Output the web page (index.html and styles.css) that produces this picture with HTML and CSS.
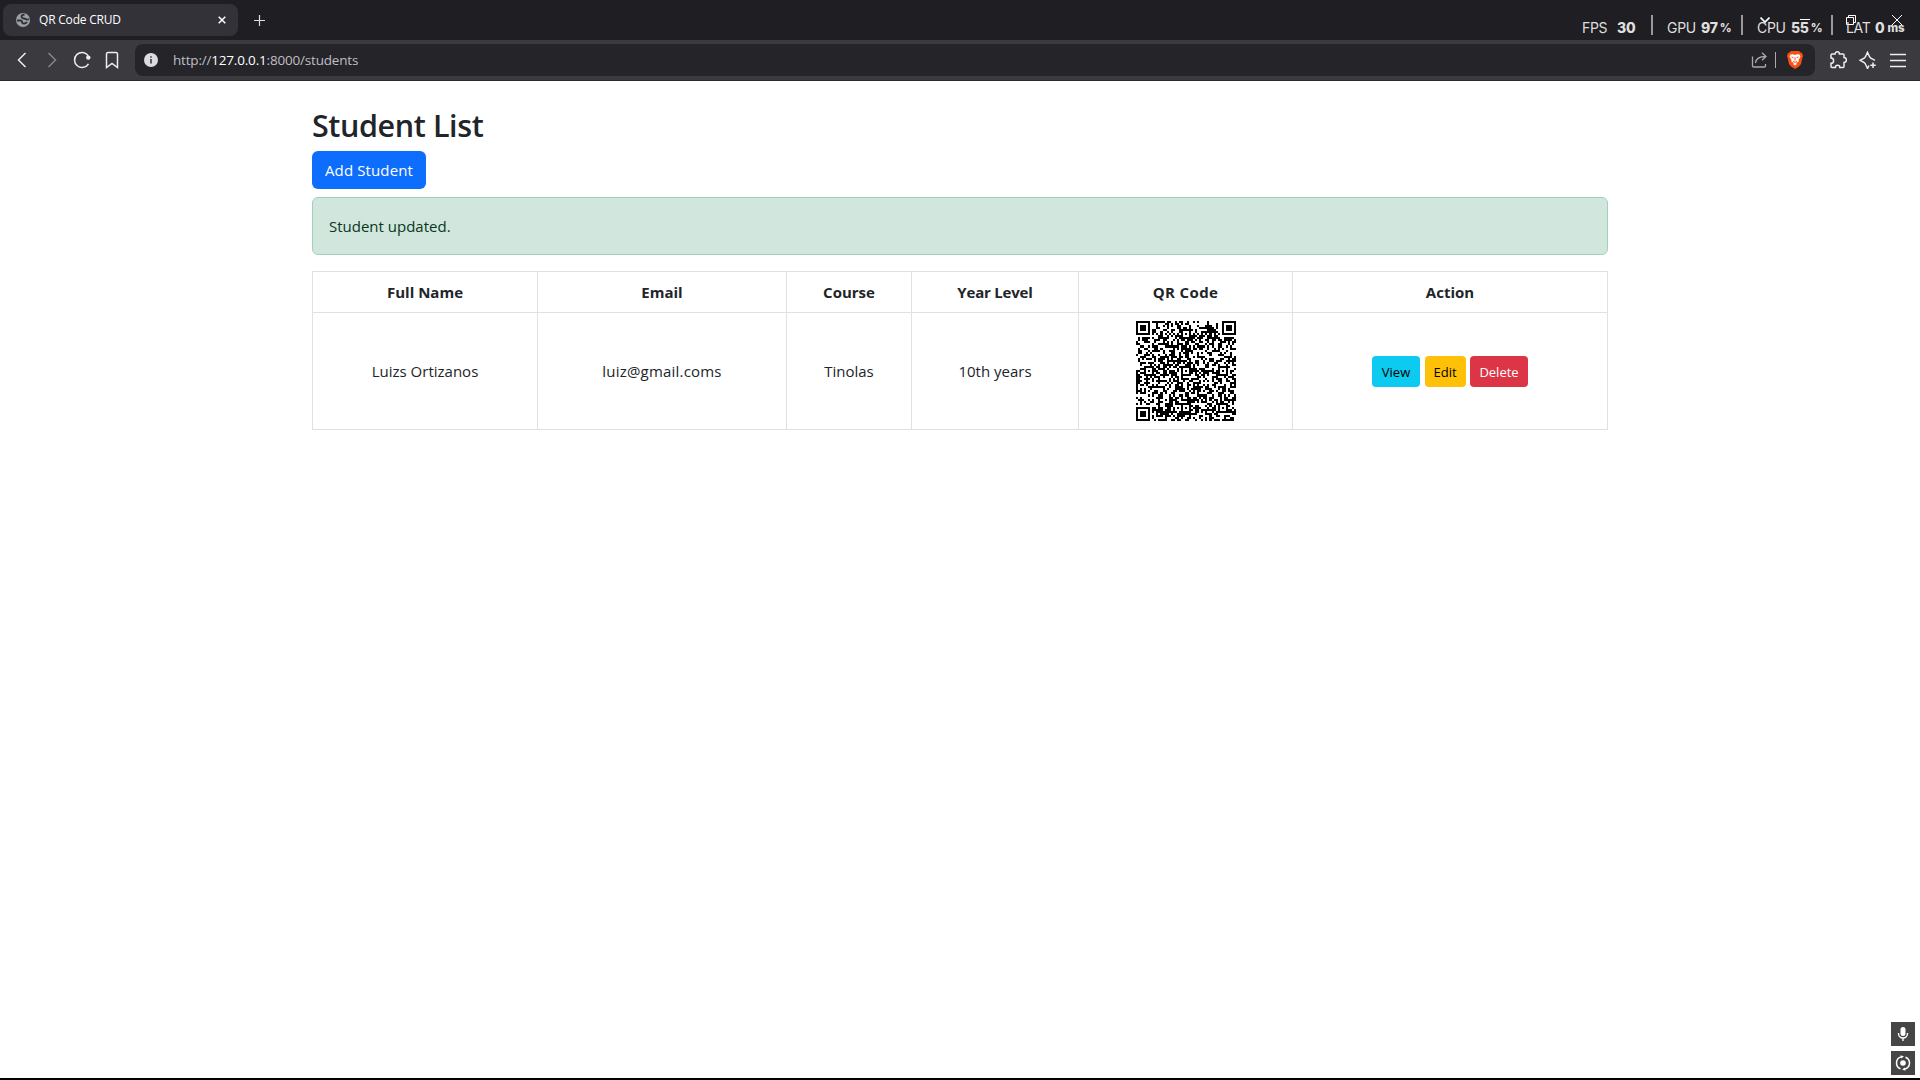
FILE: index.html
```html
<!DOCTYPE html>
<html lang="en">
<head>
<meta charset="utf-8">
<title>QR Code CRUD</title>
<link rel="stylesheet" href="styles.css">
</head>
<body>
<header class="tabs">
  <div class="tab">
    <svg class="globe" width="14" height="14" viewBox="0 0 14 14"><circle cx="7" cy="7" r="7" fill="#9aa0a6"/><path d="M1 7.500h3.500q1.500 0 1.500 1.500t2 1.500 3-1.500M8.500 1.500Q5.500 2 5.500 3.500T8 5.500t2.500 1 2.500-.5" fill="none" stroke="#333238" stroke-width="1.800"/></svg>
    <span class="tab-title">QR Code CRUD</span>
    <svg class="tab-close" width="8" height="8" viewBox="0 0 8 8"><path d="M.7.7l6.600 6.600M7.300.7L.7 7.300" stroke="#fff" stroke-width="1.500"/></svg>
  </div>
  <svg class="plus" width="11" height="11" viewBox="0 0 11 11"><path d="M5.500 0v11M0 5.500h11" stroke="#ddd" stroke-width="1.200"/></svg>
  <div class="window-controls">
    <svg width="10" height="10" viewBox="0 0 10 10"><path d="M.5 2.500L5 7l4.500-4.500" stroke-width="1.700"/></svg>
    <svg width="10" height="10" viewBox="0 0 10 10"><path d="M0 4.500h10"/></svg>
    <svg width="10" height="10" viewBox="0 0 10 10"><path d="M.5 2.500h7v7h-7zM2.500 2.500v-2h7v7h-2"/></svg>
    <svg width="10" height="10" viewBox="0 0 10 10"><path d="M0 0l10 10M10 0L0 10"/></svg>
  </div>
  <div class="hud">
    <div class="stat"><span>FPS</span><b class="fps">30</b></div>
    <div class="stat"><span>GPU</span><b>97</b><small>%</small></div>
    <div class="stat"><span>CPU</span><b>55</b><small>%</small></div>
    <div class="stat"><span class="lat">LAT</span><b>0</b><small class="ms">ms</small></div>
  </div>
</header>
<nav class="toolbar">
  <div class="nav-icons">
    <svg width="18" height="18" viewBox="0 0 18 18"><path d="M12.500 2L5.500 9l7 7"/></svg>
    <svg class="dim" width="18" height="18" viewBox="0 0 18 18"><path d="M5.500 2l7 7-7 7"/></svg>
    <svg width="18" height="18" viewBox="0 0 18 18"><path d="M15.500 12.800A7.500 7.500 0 1 1 15.300 4.800"/><circle cx="15.300" cy="6.600" r="2.200" fill="#eee" stroke="none"/></svg>
    <svg width="18" height="18" viewBox="0 0 18 18"><path d="M3.500 16.500V3q0-1.500 1.500-1.500h8q1.500 0 1.500 1.500v13.500L9 12.500z"/></svg>
  </div>
  <div class="address">
    <svg width="14" height="14" viewBox="0 0 14 14"><circle cx="7" cy="7" r="7" fill="#dcdce0"/><path d="M7 6v4.500M7 3.200v1.600" stroke="#444349" stroke-width="1.700"/></svg>
    <span class="url">http://<em>127.0.0.1</em>:8000/students</span>
    <svg class="share" width="17" height="16" viewBox="0 0 17 16"><path d="M1.500 4.500v9.500q0 1 1 1h11q1 0 1-1v-2M4.500 11C5 6.500 8 4.500 14.500 4.500M11 .8l4 3.700-4 3.800" fill="none" stroke="#aaa9ae" stroke-width="1.300"/></svg>
    <i class="sep"></i>
    <svg class="brave" width="16" height="18" viewBox="0 0 16 18"><path d="M4 0h8l1.500 1.500L15 2l1 3-.7 2-1.300 6-2 2.500L8 18l-4-2.500L2 13 .7 7 0 5l1-3 1.500-.5z" fill="#fb5014"/><path d="M3.500 3.500L6 3.200l2 .8 2-.8 2.500.3 1 2-2 3.500.3 1.500-2.800 1.500L10 13l-2 1.500L6 13l1-1-2.800-1.500.3-1.500-2-3.500z" fill="#fff"/><path d="M4.500 6l2 .7M11.500 6l-2 .7M8 6.500v3M6 10.500l2 .8 2-.8" stroke="#fb5014" fill="none"/></svg>
  </div>
  <div class="tools">
    <svg width="18" height="18" viewBox="0 0 18 18"><path d="M2 4q0-1 1-1h3a2.200 2.200 0 0 1 4.400 0H14q1 0 1 1v2.600a2.400 2.400 0 0 1 0 4.800V15.500q0 1-1 1h-3.200a2.200 2.200 0 0 0-4.400 0H3q-1 0-1-1v-3.200a2.600 2.600 0 0 0 0-5.200z"/></svg>
    <svg width="18" height="18" viewBox="0 0 18 18"><path d="M10 14.500L8.500 17.500l-1.800-4Q6 11.800 4.200 11L1 9.300l3.200-1.600Q6 7 6.700 5.200l1.800-3.900 1.800 3.900Q11 7 12.800 7.700L16 9.300M14 11.500v5.500M11.300 14.200h5.400"/></svg>
    <svg width="18" height="18" viewBox="0 0 18 18"><path d="M1 3.500h16M1 9.500h16M1 15.500h16"/></svg>
  </div>
</nav>
<main class="page">
  <div class="container">
    <h2 class="title">Student List</h2>
    <a class="btn btn-primary">Add Student</a>
    <div class="alert">Student updated.</div>
    <table class="table">
      <colgroup><col class="c-name"><col class="c-email"><col class="c-course"><col class="c-year"><col class="c-qr"><col class="c-action"></colgroup>
      <thead><tr><th>Full Name</th><th>Email</th><th>Course</th><th class="year">Year Level</th><th class="code">QR Code</th><th>Action</th></tr></thead>
      <tbody><tr>
        <td class="name">Luizs Ortizanos</td><td class="email">luiz@gmail.coms</td><td>Tinolas</td><td>10th years</td>
        <td><svg class="qr" width="100" height="100" viewBox="0 0 49 49"><path id="qr"/></svg></td>
        <td><div class="actions"><a class="btn-sm view">View</a><a class="btn-sm edit">Edit</a><a class="btn-sm delete">Delete</a></div></td>
      </tr></tbody>
    </table>
  </div>
</main>
<aside class="floating">
  <div class="float-btn"><svg width="24" height="24" viewBox="0 0 24 24"><rect x="9.500" y="5" width="5" height="9" rx="2.500" fill="#fff"/><path d="M7.500 11v.5a4.500 4.500 0 0 0 9 0V11M12 16v3" fill="none" stroke="#fff" stroke-width="1.400"/></svg></div>
  <div class="float-btn"><svg width="24" height="24" viewBox="0 0 24 24"><circle cx="12" cy="12" r="2.800" fill="#fff"/><path d="M10 5.900A6.300 6.300 0 0 0 9.500 17.800M14 18.100A6.300 6.300 0 0 0 14.500 6.200" fill="none" stroke="#fff" stroke-width="1.500"/><path d="M9.500 4.200l3.500 1.300-3 2zM14.500 19.800L11 18.500l3-2z" fill="#fff"/></svg></div>
</aside>
<script src="qr.js"></script>
</body>
</html>
```
FILE: styles.css
```css
* { box-sizing: border-box; }
body {
  margin: 0;
  height: 1080px;
  display: flex;
  flex-direction: column;
  overflow: hidden;
  background: #fff;
  color: #212529;
  font: 15px/24px "Open Sans", "Noto Sans", sans-serif;
}
svg { display: block; flex: none; }

.tabs {
  position: relative;
  flex: none;
  height: 40px;
  padding: 4px 0 4px 3px;
  display: flex;
  align-items: center;
  background: #1f1e23;
}
.tab {
  width: 235px;
  height: 32px;
  padding: 0 12px 0 13px;
  display: flex;
  align-items: center;
  border-radius: 8px;
  background: #333238;
  color: #fff;
}
.tab-title { margin-left: 9px; font-size: 12px; letter-spacing: -0.200px; }
.tab-close { margin-left: auto; }
.plus { margin-left: 16px; }
.window-controls {
  margin-left: auto;
  padding-right: 18px;
  display: flex;
  gap: 36px;
  fill: none;
  stroke: #fff;
}
.window-controls svg:first-child { margin-right: -6px; }
.hud {
  position: absolute;
  top: 15px;
  right: 1px;
  display: flex;
  color: #dfdfdf;
  font: 14px/26px Inter, sans-serif;
}
.stat {
  width: 90px;
  height: 20px;
  padding-left: 14px;
  display: flex;
  white-space: nowrap;
  border-left: 2px solid #99989b;
}
.stat:first-child { width: 69px; padding-left: 0; border: 0; }
.stat:last-child { width: 88px; padding-left: 13px; }
.stat span { width: 34px; letter-spacing: -0.300px; }
.stat:first-child span { width: 35px; }
.stat .lat { width: 29px; }
.stat b { letter-spacing: -0.300px; font-weight: 800; }
.stat small { margin-left: 2px; font-size: 11.500px; font-weight: 800; }
.stat .ms { margin-left: 3px; }

.toolbar {
  flex: none;
  height: 41px;
  padding: 4px 13px 5px;
  display: flex;
  align-items: center;
  background: #3b3a3f;
  border-bottom: 1px solid #2b2a2f;
}
.nav-icons { width: 122px; display: flex; gap: 12px; }
.nav-icons svg, .tools svg { fill: none; stroke: #eee; stroke-width: 1.500; }
.nav-icons .dim { stroke: #85848a; }
.address {
  width: 1680px;
  height: 32px;
  padding: 0 12px 0 9px;
  display: flex;
  align-items: center;
  border-radius: 8px;
  background: #252429;
}
.url { margin-left: 15px; color: #bfbec3; font-size: 13.500px; letter-spacing: -0.190px; }
.url em { color: #fff; font-style: normal; }
.share { margin-left: auto; }
.sep { width: 1px; height: 16px; margin: 0 11px 0 7px; background: #aaa9ae; }
.tools { margin-left: 14px; display: flex; gap: 12px; }

.page { flex: 1; border-bottom: 2px solid #000; }
.container { width: 1296px; margin: 0 auto; padding-top: 25px; }
.title {
  margin: 0 0 7px;
  font-size: 30.500px;
  line-height: 38.400px;
  font-weight: 600;
  letter-spacing: -0.400px;
}
.btn {
  display: block;
  width: 114px;
  height: 38px;
  padding: 7px 0;
  border-radius: 6px;
  text-align: center;
  letter-spacing: 0.120px;
}
.btn-primary { background: #0d6efd; color: #fff; }
.alert {
  height: 58px;
  margin: 8px 0 16px;
  padding: 16px;
  border: 1px solid #a3cfbb;
  border-radius: 6px;
  background: #d1e7dd;
  color: #0a3622;
}
.table {
  width: 1296px;
  table-layout: fixed;
  border-collapse: collapse;
  text-align: center;
}
.c-name { width: 225px; }
.c-email { width: 249px; }
.c-course { width: 125px; }
.c-year { width: 167px; }
.c-qr { width: 214px; }
.c-action { width: 315px; }
.table th, .table td { padding: 8px; border: 1px solid #dee2e6; vertical-align: middle; }
.table th { font-weight: 700; }
.table .year { letter-spacing: -0.200px; }
.table .code { letter-spacing: 0.350px; }
.table .email { letter-spacing: 0.200px; }
.qr { margin: 0 auto; shape-rendering: crispEdges; }
.actions { display: flex; justify-content: center; gap: 4.500px; }
.btn-sm { height: 31px; border-radius: 4px; font-size: 13px; line-height: 32px; color: #000; }
.view { width: 48px; background: #0dcaf0; }
.edit { width: 41px; background: #ffc107; }
.delete { width: 58px; background: #dc3545; color: #fff; }

.floating {
  position: absolute;
  right: 5px;
  bottom: 5px;
  display: flex;
  flex-direction: column;
  gap: 5px;
}
.float-btn { width: 24px; height: 24px; background: #454545; }
```
FILE: qr.js
```js
// Draws a placeholder with the layout of a version 8 (49 x 49) QR symbol.
// The finder, timing and alignment patterns are real; the data modules are
// seeded filler that encodes nothing, so the symbol does not scan.
const size = 49;
let seed = 20731;
const bit = () => (seed = (seed * 1103515245 + 12345) % 2147483648) / 2147483648 < 0.5;
const grid = Array.from({ length: size }, () => Array.from({ length: size }, bit));

for (let i = 0; i < size; i++) grid[6][i] = grid[i][6] = i % 2 === 0;

function square(cx, cy, radius, light) {
  for (let y = -radius; y <= radius; y++) {
    for (let x = -radius; x <= radius; x++) {
      const row = grid[cy + y];
      if (row && cx + x >= 0 && cx + x < size) {
        row[cx + x] = !light.includes(Math.max(Math.abs(x), Math.abs(y)));
      }
    }
  }
}
for (const [x, y] of [[3, 3], [45, 3], [3, 45]]) square(x, y, 4, [2, 4]);
for (const [x, y] of [[24, 6], [6, 24], [24, 24], [42, 24], [24, 42], [42, 42]]) square(x, y, 2, [1]);

let d = "";
grid.forEach((row, y) => row.forEach((dark, x) => { if (dark) d += `M${x} ${y}h1v1h-1z`; }));
document.getElementById("qr").setAttribute("d", d);
```
